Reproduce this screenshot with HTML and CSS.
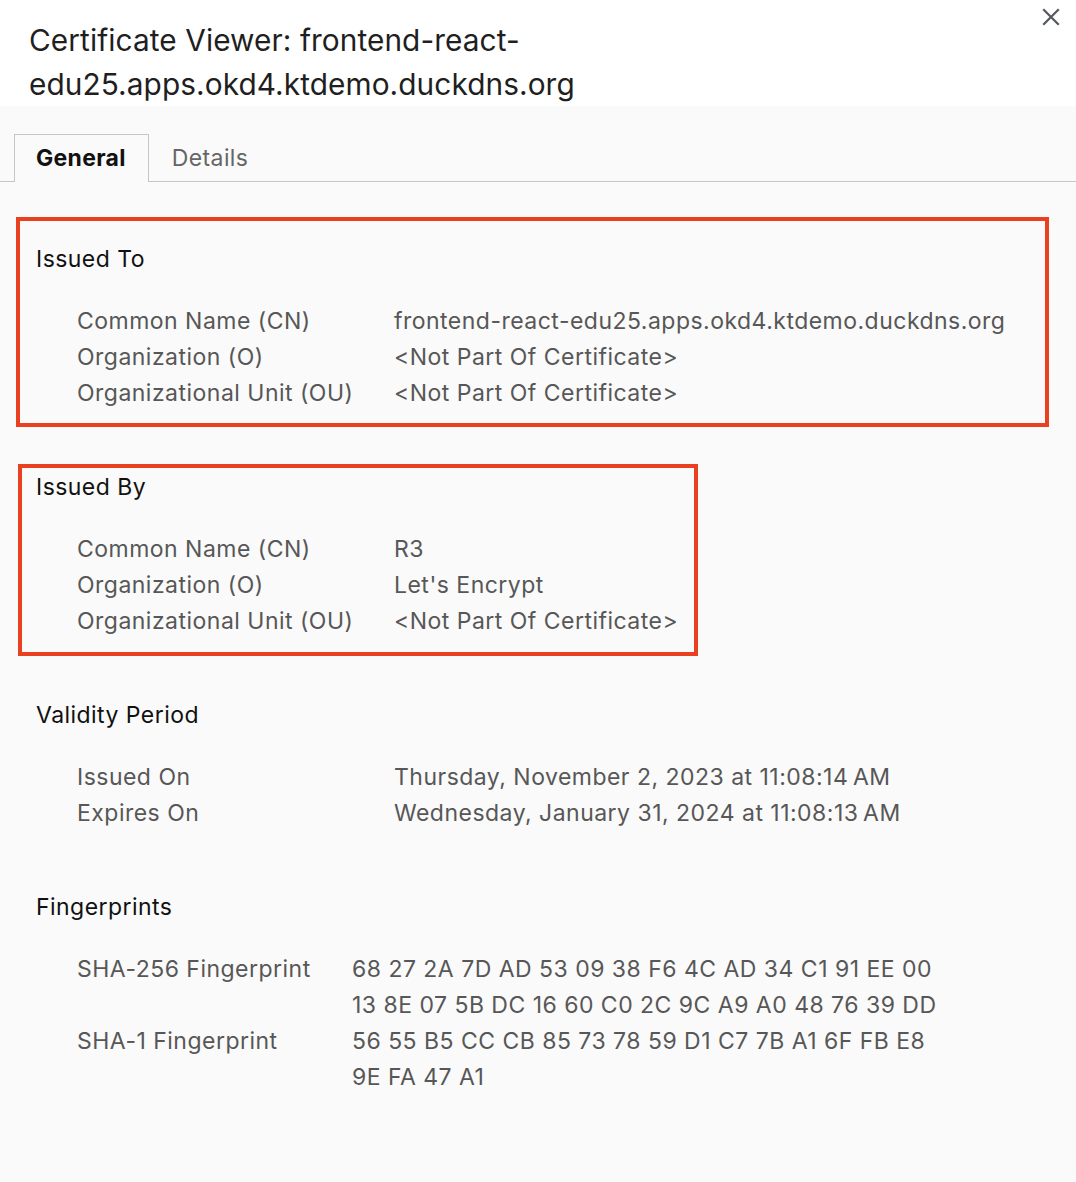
FILE: index.html
```html
<!DOCTYPE html>
<html lang="en">
<head>
<meta charset="utf-8">
<title>Certificate Viewer</title>
<link rel="stylesheet" href="styles.css">
</head>
<body>
<div class="dialog">
  <header class="header">
    <h1 class="title">Certificate Viewer: frontend-react-<br>edu25.apps.okd4.ktdemo.duckdns.org</h1>
    <button class="close" aria-label="Close">
      <svg width="18" height="18" viewBox="0 0 18 18"><path d="M2 2 L16 16 M16 2 L2 16" stroke="#54585e" stroke-width="2.2" stroke-linecap="square" fill="none"/></svg>
    </button>
  </header>
  <nav class="tabs">
    <div class="tab active">General</div>
    <div class="tab">Details</div>
  </nav>
  <main class="content">
    <section class="section mark mark-to">
      <h2 class="heading">Issued To</h2>
      <div class="rows">
        <div class="label">Common Name (CN)</div><div class="value">frontend-react-edu25.apps.okd4.ktdemo.duckdns.org</div>
        <div class="label">Organization (O)</div><div class="value">&lt;Not Part Of Certificate&gt;</div>
        <div class="label">Organizational Unit (OU)</div><div class="value">&lt;Not Part Of Certificate&gt;</div>
      </div>
    </section>
    <section class="section mark mark-by">
      <h2 class="heading">Issued By</h2>
      <div class="rows">
        <div class="label">Common Name (CN)</div><div class="value">R3</div>
        <div class="label">Organization (O)</div><div class="value">Let's Encrypt</div>
        <div class="label">Organizational Unit (OU)</div><div class="value">&lt;Not Part Of Certificate&gt;</div>
      </div>
    </section>
    <section class="section">
      <h2 class="heading">Validity Period</h2>
      <div class="rows">
        <div class="label">Issued On</div><div class="value">Thursday, November 2, 2023 at 11:08:14&#8239;AM</div>
        <div class="label">Expires On</div><div class="value">Wednesday, January 31, 2024 at 11:08:13&#8239;AM</div>
      </div>
    </section>
    <section class="section">
      <h2 class="heading">Fingerprints</h2>
      <div class="rows rows-fp">
        <div class="label">SHA-256 Fingerprint</div><div class="value">68 27 2A 7D AD 53 09 38 F6 4C AD 34 C1 91 EE 00<br>13 8E 07 5B DC 16 60 C0 2C 9C A9 A0 48 76 39 DD</div>
        <div class="label">SHA-1 Fingerprint</div><div class="value">56 55 B5 CC CB 85 73 78 59 D1 C7 7B A1 6F FB E8<br>9E FA 47 A1</div>
      </div>
    </section>
  </main>
</div>
</body>
</html>
```

FILE: styles.css
```css
*, *::before, *::after { box-sizing: border-box; }
html, body { margin: 0; padding: 0; }
body {
  font-family: Inter, "Noto Sans", "Liberation Sans", sans-serif;
  background: #fafafa;
  color: #1a1a1a;
  width: 1076px;
  min-height: 1182px;
}
.dialog { position: relative; }
.header {
  background: #ffffff;
  padding: 18px 60px 0 29px;
  height: 106px;
}
.title {
  margin: 0;
  font-weight: 400;
  font-size: 29.8px;
  letter-spacing: 0.08px;
  line-height: 44px;
  color: #1f1f1f;
}
.close {
  position: absolute;
  top: 7px;
  right: 15px;
  width: 20px;
  height: 20px;
  padding: 0;
  border: 0;
  background: transparent;
  display: flex;
  align-items: center;
  justify-content: center;
}
.tabs {
  display: flex;
  margin-top: 28px;
  padding-left: 14px;
  border-bottom: 1px solid #c6c6c6;
  height: 48px;
}
.tab {
  height: 48px;
  padding: 0 22px 0 22px;
  font-size: 23px;
  letter-spacing: 0.4px;
  line-height: 46px;
  color: #666666;
  border: 1px solid transparent;
  border-bottom: 0;
}
.tab.active {
  color: #111111;
  font-weight: 700;
  background: #fafafa;
  border-color: #c6c6c6;
  height: 48px;
  margin-bottom: -1px;
  padding: 0 22px 0 21px;
  letter-spacing: 0.3px;
}
.content {
  padding: 59px 0 40px 36px;
}
.section {
  position: relative;
  margin-bottom: 58px;
}
.heading {
  margin: 0 0 26px 0;
  font-size: 23px;
  letter-spacing: 0.45px;
  line-height: 36px;
  font-weight: 400;
  color: #111111;
}
.rows {
  display: grid;
  grid-template-columns: 317px 1fr;
  padding-left: 41px;
  font-size: 23px;
  letter-spacing: 0.48px;
  line-height: 36px;
  color: #575757;
}
.rows-fp { grid-template-columns: 275px 1fr; }
.value { white-space: nowrap; }
.mark::after {
  content: "";
  position: absolute;
  border: 4px solid #e9411f;
  pointer-events: none;
}
.mark-to::after {
  top: -24px;
  left: -20px;
  width: 1033px;
  bottom: -16px;
}
.mark-by::after {
  top: -5px;
  left: -18px;
  width: 680px;
  bottom: -17px;
}
```
